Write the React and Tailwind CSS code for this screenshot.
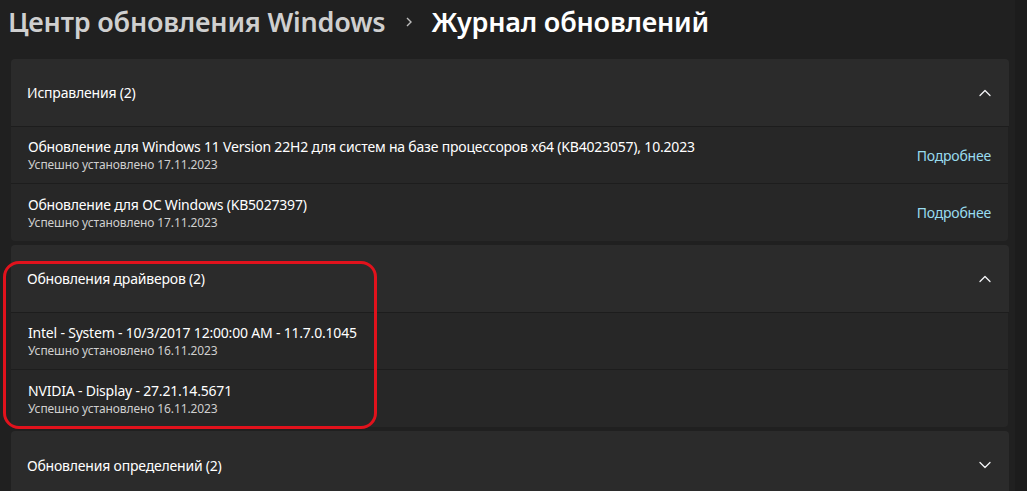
import React from "react";

const font = { fontFamily: '"Noto Sans", "Open Sans", sans-serif' };

function Chevron({ up }) {
  return (
    <svg width="12" height="8" viewBox="0 0 12 8" className="text-gray-100">
      <path d={up ? "M1 6.5 L6 1.5 L11 6.5" : "M1 1.5 L6 6.5 L11 1.5"} fill="none" stroke="currentColor" strokeWidth="1.3" strokeLinecap="round" strokeLinejoin="round" />
    </svg>
  );
}

function Row({ title, date, link, last }) {
  return (
    <div className={`h-[57px] bg-[#272727] flex items-center justify-between pl-[17px] pr-[17px] mr-[1px] ${last ? "rounded-b-[4px]" : "border-b border-[#1d1d1d]"}`}>
      <div className="flex flex-col pt-[2px]">
        <div className="text-[14px] leading-[18px] text-[#ffffff] tracking-[-0.2px]">{title}</div>
        <div className="text-[12px] leading-[18px] text-[#cfcfcf] tracking-[-0.1px]">{date}</div>
      </div>
      {link && <div className="text-[14px] text-[#99dcef] tracking-[-0.2px]">Подробнее</div>}
    </div>
  );
}

function Section({ title, up, rows }) {
  return (
    <div className="flex flex-col">
      <div className={`h-[68px] bg-[#2b2b2b] flex items-center justify-between pl-[16px] pr-[18px] ${up ? "rounded-t-[4px] border-b border-[#1d1d1d]" : "rounded-t-[4px]"}`}>
        <div className="text-[14px] text-[#ffffff] tracking-[-0.2px]">{title}</div>
        <Chevron up={up} />
      </div>
      {rows && rows.map((r, i) => <Row key={i} {...r} last={i === rows.length - 1} />)}
    </div>
  );
}

export default function App() {
  return (
    <div className="w-[1027px] h-[491px] overflow-hidden bg-[#202020] relative" style={font}>
      <div className="flex items-center h-[44px] pl-[8px] pt-[0px]">
        <span className="text-[27px] font-semibold text-[#cfcfcf] tracking-[-0.2px]">Центр обновления Windows</span>
        <span className="ml-[19px] mr-[17px] text-[#bdbdbd]">
          <svg width="10" height="12" viewBox="0 0 10 12"><path d="M3 2 L7 6 L3 10" fill="none" stroke="currentColor" strokeWidth="1.4" /></svg>
        </span>
        <span className="text-[27px] font-semibold text-white tracking-[-0.2px]">Журнал обновлений</span>
      </div>
      <div className="flex flex-col gap-[4px] ml-[11px] w-[998px] mt-[15px]">
        <Section
          title="Исправления (2)"
          up
          rows={[
            { title: "Обновление для Windows 11 Version 22H2 для систем на базе процессоров x64 (KB4023057), 10.2023", date: "Успешно установлено 17.11.2023", link: true },
            { title: "Обновление для ОС Windows (KB5027397)", date: "Успешно установлено 17.11.2023", link: true },
          ]}
        />
        <Section
          title="Обновления драйверов (2)"
          up
          rows={[
            { title: "Intel - System - 10/3/2017 12:00:00 AM - 11.7.0.1045", date: "Успешно установлено 16.11.2023" },
            { title: "NVIDIA - Display - 27.21.14.5671", date: "Успешно установлено 16.11.2023" },
          ]}
        />
        <Section title="Обновления определений (2)" />
      </div>
      <div className="absolute left-[3px] top-[261px] w-[374px] h-[168px] border-[3px] border-[#e1121c] rounded-[16px] pointer-events-none" />
      <div className="absolute right-0 top-0 w-[12px] h-full bg-[#1c1c1c]" />
    </div>
  );
}
